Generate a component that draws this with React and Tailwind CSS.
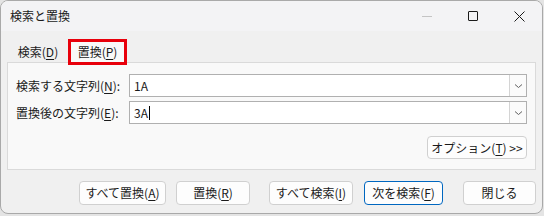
import React from 'react'

function Mn({ children }) {
    return <span className="underline underline-offset-2">{children}</span>
}

function Combo({ value, caret }) {
    return (
        <div className="w-[398px] h-[23px] border border-[#b0b0b0] bg-white flex items-center">
            <div className="flex-1 pl-[4px] text-[12px] text-[#1a1a1a] flex items-center">
                {value}
                {caret && <span className="inline-block w-px h-[14px] bg-black ml-px" />}
            </div>
            <div className="w-[17px] h-[21px] border-l border-[#d4d4d4] bg-[#fbfbfb] flex items-center justify-center">
                <svg width="9" height="6" viewBox="0 0 9 6">
                    <path d="M1 1.5 L4.5 4.5 L8 1.5" fill="none" stroke="#606060" strokeWidth="1" />
                </svg>
            </div>
        </div>
    )
}

function Btn({ w, focus, children }) {
    return (
        <button
            className={
                'h-[24px] rounded-[4px] bg-[#fdfdfd] text-[12px] text-[#1a1a1a] flex items-center justify-center border ' +
                (focus ? 'border-[#0067c0]' : 'border-[#d0d0d0]')
            }
            style={{ width: w }}
        >
            {children}
        </button>
    )
}

export default function App() {
    return (
        <div className="w-[544px] h-[216px] bg-[#e4e4e4] font-['Noto_Sans_CJK_JP','Noto_Sans',sans-serif]">
            <div className="w-[543px] h-[214px] rounded-[8px] border border-[#a9a9a9] bg-[#f0f0f0] overflow-hidden flex flex-col">
                {/* title bar */}
                <div className="h-[30px] bg-[#f3f3f5] flex items-center">
                    <span className="pl-[9px] text-[12px] text-[#1a1a1a]">検索と置換</span>
                    <div className="ml-auto flex h-full">
                        <div className="w-[46px] flex items-center justify-center">
                            <div className="w-[10px] h-px bg-[#c4c4c4]" />
                        </div>
                        <div className="w-[46px] flex items-center justify-center">
                            <div className="w-[10px] h-[10px] border border-[#1a1a1a] rounded-[1px]" />
                        </div>
                        <div className="w-[46px] flex items-center justify-center">
                            <svg width="11" height="11" viewBox="0 0 11 11">
                                <path d="M0.5 0.5 L10.5 10.5 M10.5 0.5 L0.5 10.5" stroke="#1a1a1a" strokeWidth="1" />
                            </svg>
                        </div>
                    </div>
                </div>

                {/* tabs */}
                <div className="h-[23px] mt-[8px] flex items-end pl-[7px]">
                    <div className="w-[60px] h-[21px] flex items-center justify-center text-[12px] text-[#1a1a1a]">
                        検索(<Mn>D</Mn>)
                    </div>
                    <div className="relative z-10 w-[59px] h-[26px] -mb-[3px] border-[3px] border-[#e8000b] bg-[#f9f9f9] flex items-center justify-center text-[12px] text-[#1a1a1a]">
                        置換(<Mn>P</Mn>)
                    </div>
                </div>

                {/* panel */}
                <div className="ml-[6px] w-[529px] h-[108px] border border-[#dadada] bg-[#f9f9f9] pt-[11px] pl-[8px] pr-[7px] flex flex-col">
                    <div className="flex items-center">
                        <span className="w-[113px] text-[12px] text-[#1a1a1a]">検索する文字列(<Mn>N</Mn>):</span>
                        <Combo value="1A" />
                    </div>
                    <div className="flex items-center mt-[4px]">
                        <span className="w-[113px] text-[12px] text-[#1a1a1a]">置換後の文字列(<Mn>E</Mn>):</span>
                        <Combo value="3A" caret />
                    </div>
                    <div className="flex justify-end mt-[12px] pr-[1px]">
                        <button className="w-[100px] h-[23px] rounded-[4px] bg-[#fdfdfd] border border-[#d0d0d0] text-[12px] text-[#1a1a1a] flex items-center justify-center">
                            オプション(<Mn>T</Mn>)&nbsp;&gt;&gt;
                        </button>
                    </div>
                </div>

                {/* bottom buttons */}
                <div className="flex justify-end items-center mt-[11px] pr-[6px]">
                    <Btn w={87}>すべて置換(<Mn>A</Mn>)</Btn>
                    <div className="w-[10px]" />
                    <Btn w={74}>置換(<Mn>R</Mn>)</Btn>
                    <div className="w-[19px]" />
                    <Btn w={84}>すべて検索(<Mn>I</Mn>)</Btn>
                    <div className="w-[11px]" />
                    <Btn w={79} focus>次を検索(<Mn>F</Mn>)</Btn>
                    <div className="w-[20px]" />
                    <Btn w={73}>閉じる</Btn>
                </div>
            </div>
        </div>
    )
}
